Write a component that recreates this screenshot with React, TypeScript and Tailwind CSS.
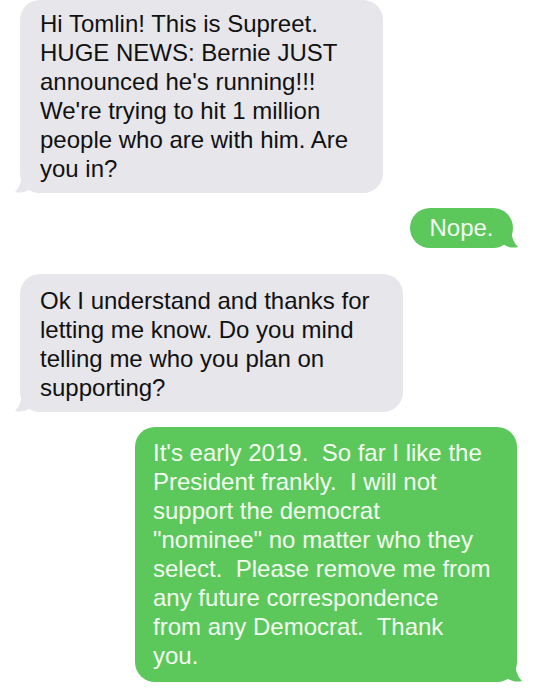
import React from "react";

type Side = "in" | "out";

const bubbleStyles: Record<Side, string> = {
    in: "bg-[#e6e6eb] text-[#111111]",
    out: "bg-[#5cc85b] text-[#f3fdf1]",
};

function Tail({ side }: { side: Side }) {
    const fill = side === "in" ? "#e6e6eb" : "#5cc85b";
    if (side === "out") {
        return (
            <svg
                className="absolute right-[-7px] bottom-0"
                width="18"
                height="22"
                viewBox="0 0 18 22"
            >
                <path d="M0 0 H9 C9 9 11 16 16 21 C10 22.5 5 21 1 18 Z" fill={fill} />
            </svg>
        );
    }
    return (
        <svg
            className="absolute left-[-7px] bottom-0"
            width="18"
            height="22"
            viewBox="0 0 18 22"
        >
            <path d="M18 0 H9 C9 9 7 16 2 21 C8 22.5 13 21 17 18 Z" fill={fill} />
        </svg>
    );
}

function Bubble({
    side,
    lines,
    className,
}: {
    side: Side;
    lines: string[];
    className: string;
}) {
    return (
        <div className={`relative rounded-[20px] ${bubbleStyles[side]} ${className}`}>
            {lines.map((line, i) => (
                <div key={i} className="whitespace-pre">
                    {line}
                </div>
            ))}
            <Tail side={side} />
        </div>
    );
}

export default function App() {
    return (
        <div className="w-[540px] h-[690px] bg-white overflow-hidden flex flex-col font-['Liberation_Sans',Arial,sans-serif] text-[24px] leading-[29px]">
            {/* Them */}
            <Bubble
                side="in"
                className="ml-[20px] w-[363px] pl-[20px] pt-[9px] pb-[10px]"
                lines={[
                    "Hi Tomlin! This is Supreet.",
                    "HUGE NEWS: Bernie JUST",
                    "announced he's running!!!",
                    "We're trying to hit 1 million",
                    "people who are with him. Are",
                    "you in?",
                ]}
            />

            {/* Me */}
            <div className="self-end mr-[27px] mt-[15px]">
                <Bubble
                    side="out"
                    className="w-[103px] h-[40px] leading-[40px] text-center"
                    lines={["Nope."]}
                />
            </div>

            {/* Them */}
            <Bubble
                side="in"
                className="ml-[20px] mt-[26px] w-[383px] pl-[20px] pt-[12px] pb-[10px]"
                lines={[
                    "Ok I understand and thanks for",
                    "letting me know. Do you mind",
                    "telling me who you plan on",
                    "supporting?",
                ]}
            />

            {/* Me */}
            <Bubble
                side="out"
                className="ml-[135px] mt-[15px] w-[382px] pl-[18px] pt-[11px] pb-[12px]"
                lines={[
                    "It's early 2019.  So far I like the",
                    "President frankly.  I will not",
                    "support the democrat",
                    "\"nominee\" no matter who they",
                    "select.  Please remove me from",
                    "any future correspondence",
                    "from any Democrat.  Thank",
                    "you.",
                ]}
            />
        </div>
    );
}
